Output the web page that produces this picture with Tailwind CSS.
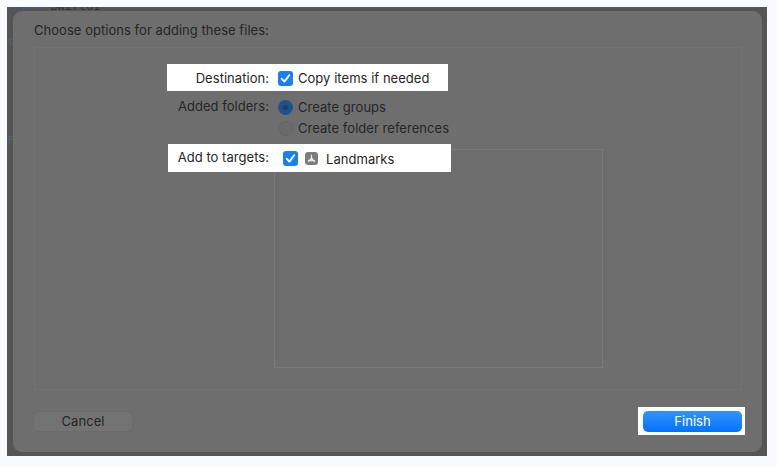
<!DOCTYPE html>
<html>
<head>
<meta charset="utf-8">
<script src="https://cdn.jsdelivr.net/npm/@tailwindcss/browser@4"></script>
</head>
<body class="w-[777px] h-[467px] overflow-hidden bg-[#fafbfe] font-['Inter','Liberation_Sans',sans-serif]">
<div class="relative ml-[7px] mt-[7px] w-[760px] h-[449px] bg-[#555555] overflow-hidden pt-[4px] pl-[6px] pr-[5px] pb-[4px]">
  <span class="absolute left-[0px] top-[-7px] text-[12px] leading-[14px] text-[#4f4f88] font-['Liberation_Mono',monospace] whitespace-nowrap">mport <span class="text-[#333333]">SwiftUI</span></span>
  <span class="absolute left-[1px] top-[28px] text-[11px] leading-[14px] text-[#55607a] font-['Liberation_Mono',monospace]">t</span>
  <span class="absolute left-[1px] top-[126px] text-[11px] leading-[14px] text-[#55607a] font-['Liberation_Mono',monospace]">P</span>
  <div class="relative h-[441px] w-[749px] rounded-[9px] bg-[#6e6e6e] flex flex-col pl-[21px] pr-[21px] text-[13px] tracking-[0.04px] leading-[18px] text-[#262626]">
    <p class="h-[36px] pt-[10px]">Choose options for adding these files:</p>
    <div class="relative h-[343px] w-[708px] border border-[#737373] pt-[15px]">
      <div class="grid grid-cols-[234px_1fr] gap-x-[5px]">
        <div class="relative z-10 text-right pt-[6px] h-[28px]">Destination:</div>
        <div class="relative z-10 flex items-center gap-[5px] pl-[4px] pt-[2px] h-[28px]">
          <span class="flex items-center justify-center w-[15px] h-[15px] rounded-[3px] bg-[#1a7ff5]">
            <svg width="11" height="11" viewBox="0 0 11 11"><path d="M1.8 5.8 L4.4 8.6 L9.2 2.2" fill="none" stroke="#fff" stroke-width="1.9" stroke-linecap="round" stroke-linejoin="round"/></svg>
          </span>
          <span>Copy items if needed</span>
        </div>
        <div class="text-right pt-[6px] h-[27px]">Added folders:</div>
        <div class="flex items-center gap-[5px] pl-[4px] pt-[5px] h-[27px]">
          <span class="flex items-center justify-center w-[15px] h-[15px] rounded-full bg-[#1d5290]"><span class="w-[5px] h-[5px] rounded-full bg-[#2a3a50]"></span></span>
          <span>Create groups</span>
        </div>
        <div class="h-[20px]"></div>
        <div class="flex items-center gap-[5px] pl-[4px] h-[20px]">
          <span class="w-[15px] h-[15px] rounded-full bg-[#6a6a6a] border border-[#636363]"></span>
          <span class="whitespace-nowrap">Create folder references</span>
        </div>
      </div>
      <div class="relative z-10 grid grid-cols-[234px_1fr] gap-x-[5px] mt-[6px] h-[28px]">
        <div class="text-right pt-[4px]">Add to targets:</div>
        <div class="flex items-center h-[28px] pl-[9px] pt-[1px] gap-[7px]">
          <span class="flex items-center justify-center w-[15px] h-[15px] rounded-[3px] bg-[#1a7ff5]">
            <svg width="11" height="11" viewBox="0 0 11 11"><path d="M1.8 5.8 L4.4 8.6 L9.2 2.2" fill="none" stroke="#fff" stroke-width="1.9" stroke-linecap="round" stroke-linejoin="round"/></svg>
          </span>
          <span class="flex items-center justify-center w-[13px] h-[13px] rounded-[3px] bg-[#7d7d7d]">
            <svg width="9" height="9" viewBox="0 0 9 9"><path d="M4.5 1 L4.5 4 M4.5 4 L1.5 7.6 M4.5 4 L7.5 7.6 M1.5 6.6 L7.5 6.6" fill="none" stroke="#e8e8e8" stroke-width="1.2" stroke-linecap="round"/></svg>
          </span>
          <span class="ml-[1px]">Landmarks</span>
        </div>
      </div>
      <div class="absolute left-[239px] top-[101px] w-[329px] h-[219px] border border-[#7a7a7a]"></div>
      <div class="absolute left-[132px] top-[16px] w-[281px] h-[27px] bg-white"></div>
      <div class="absolute left-[133px] top-[96px] w-[283px] h-[28px] bg-white"></div>
    </div>
    <div class="flex items-center justify-between pt-[17px]">
      <button class="-ml-[1px] w-[100px] h-[21px] rounded-[5px] bg-[#737373] border border-[#6a6a6a]">Cancel</button>
      <div class="-mr-[4px] w-[107px] h-[28px] bg-white flex items-center pl-[5px]">
        <button class="w-[99px] h-[21px] rounded-[5px] bg-gradient-to-b from-[#2f94fc] to-[#0271fb] text-white">Finish</button>
      </div>
    </div>
  </div>
</div>
</body>
</html>
